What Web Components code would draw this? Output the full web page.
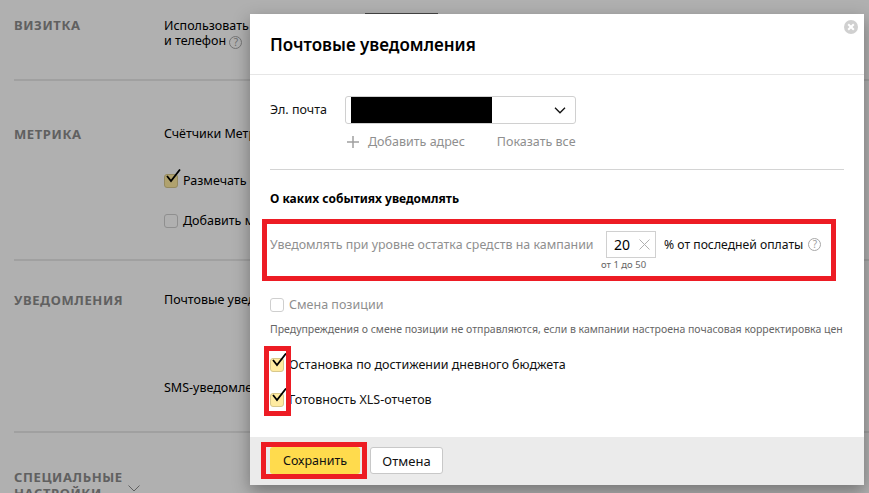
<!DOCTYPE html>
<html lang="ru">
<head>
<meta charset="utf-8">
<title>Почтовые уведомления</title>
<style>
	html, body {
		margin: 0;
		height: 493px;
		overflow: hidden;
		background: #fff;
		color: #000;
		font: 12.5px/16px "Noto Sans", "Open Sans", sans-serif;
	}
</style>
</head>
<body>
<settings-page>
	<settings-section style="height:79px" top="17">
		<span slot="label">Визитка</span>
		<div style="line-height:15px;margin-top:1px">Использовать единые адрес<br>и телефон <help-icon></help-icon></div>
	</settings-section>
	<settings-section style="height:178px" top="45">
		<span slot="label">Метрика</span>
		<div>Счётчики Метрики</div>
		<div style="margin-top:31px;display:flex;gap:5px;align-items:center"><check-box checked></check-box>Размечать ссылки</div>
		<div style="margin-top:24px;display:flex;gap:5px;align-items:center"><check-box></check-box>Добавить метку</div>
	</settings-section>
	<settings-section style="height:170px" top="31">
		<span slot="label">Уведомления</span>
		<div>Почтовые уведомления</div>
		<div style="margin-top:72px">SMS-уведомления</div>
	</settings-section>
	<settings-section top="36" last>
		<span slot="label">Специальные настройки</span>
	</settings-section>
</settings-page>
<notify-dialog></notify-dialog>
<script>
const SettingsPageTemplate = document.createElement('template');
SettingsPageTemplate.innerHTML = `
	<style>
		:host {
			display: block;
			height: 493px;
		}
		.scrim {
			position: absolute;
			inset: 0;
			background: rgba(0, 0, 0, .31);
		}
		.peek {
			position: absolute;
			left: 365px;
			top: 13px;
			width: 73px;
			height: 1px;
			background: #666;
		}
	</style>
	<slot></slot>
	<div class="peek"></div>
	<div class="scrim"></div>
`;

class SettingsPage extends HTMLElement {
	constructor() {
		super();
		this.attachShadow({mode: 'open'}).append(SettingsPageTemplate.content.cloneNode(true));
	}
}

const SettingsSectionTemplate = document.createElement('template');
SettingsSectionTemplate.innerHTML = `
	<style>
		:host {
			display: block;
			box-sizing: content-box;
			margin: 0 0 0 14px;
			border-bottom: 2px solid #e8e8e8;
		}
		:host([last]) {
			border-bottom: 0;
		}
		.row {
			display: grid;
			grid-template-columns: 150px 86px;
		}
		.label {
			width: 116px;
			font-size: 13px;
			font-weight: 700;
			color: #8c8c8c;
			letter-spacing: .6px;
			text-transform: uppercase;
			line-height: 16px;
		}
		.body {
			overflow: hidden;
			white-space: nowrap;
		}
		.more {
			position: absolute;
			left: 128px;
			top: 485px;
		}
	</style>
	<div class="row">
		<div class="label"><slot name="label"></slot></div>
		<div class="body"><slot></slot></div>
	</div>
`;

class SettingsSection extends HTMLElement {
	constructor() {
		super();
		const root = this.attachShadow({mode: 'open'});
		root.append(SettingsSectionTemplate.content.cloneNode(true));
		root.querySelector('.row').style.paddingTop = this.getAttribute('top') + 'px';
		if (this.hasAttribute('last')) {
			root.querySelector('.row').insertAdjacentHTML('beforeend', `
				<svg class="more" width="12" height="7" viewBox="0 0 12 7"><path d="M.5.5 6 6 11.5.5" fill="none" stroke="#8c8c8c"/></svg>`);
		}
	}
}

const CheckBoxTemplate = document.createElement('template');
CheckBoxTemplate.innerHTML = `
	<style>
		:host {
			display: inline-block;
			position: relative;
			flex: none;
			width: 14px;
			height: 14px;
			box-sizing: border-box;
			border: 1px solid #cfcfcf;
			border-radius: 3px;
			background: #fff;
		}
		:host([checked]) {
			background: #ffeba0;
			border-color: #d8c88c;
		}
		svg {
			display: none;
			position: absolute;
			left: 1px;
			top: -6px;
		}
		:host([checked]) svg {
			display: block;
		}
	</style>
	<svg width="16" height="14" viewBox="0 0 16 14"><path d="M1 7 5 12 14 .5" fill="none" stroke="#000" stroke-width="1.8"/></svg>
`;

class CheckBox extends HTMLElement {
	constructor() {
		super();
		this.attachShadow({mode: 'open'}).append(CheckBoxTemplate.content.cloneNode(true));
	}
}

const HelpIconTemplate = document.createElement('template');
HelpIconTemplate.innerHTML = `
	<style>
		:host {
			display: inline-block;
			width: 13px;
			height: 13px;
			box-sizing: border-box;
			border: 1px solid #a8a8a8;
			border-radius: 50%;
			color: #a0a0a0;
			font: 10px/11px "Noto Sans", sans-serif;
			text-align: center;
			vertical-align: -1px;
		}
	</style>
	?
`;

class HelpIcon extends HTMLElement {
	constructor() {
		super();
		this.attachShadow({mode: 'open'}).append(HelpIconTemplate.content.cloneNode(true));
	}
}

const RedMarkTemplate = document.createElement('template');
RedMarkTemplate.innerHTML = `
	<style>
		:host {
			display: block;
			position: absolute;
			box-sizing: border-box;
			border: 5px solid #ed1c24;
			pointer-events: none;
		}
	</style>
`;

class RedMark extends HTMLElement {
	constructor() {
		super();
		this.attachShadow({mode: 'open'}).append(RedMarkTemplate.content.cloneNode(true));
	}
}

const NotifyDialogTemplate = document.createElement('template');
NotifyDialogTemplate.innerHTML = `
	<style>
		:host {
			display: flex;
			flex-direction: column;
			position: absolute;
			left: 250px;
			top: 14px;
			width: 614px;
			height: 471px;
			background: #fff;
			box-shadow: 0 6px 16px rgba(0, 0, 0, .35);
			color: #111;
		}
		header {
			height: 61px;
			padding: 20px 20px 0;
			box-sizing: border-box;
			border-bottom: 1px solid #e6e6e6;
			font-size: 17px;
			line-height: 22px;
			font-weight: 600;
			color: #000;
		}
		.close {
			position: absolute;
			right: 6px;
			top: 6px;
		}
		main {
			flex: 1;
			padding: 21px 20px 0;
		}
		.mail {
			display: grid;
			grid-template-columns: 75px 231px;
			align-items: center;
		}
		.select {
			display: flex;
			align-items: center;
			justify-content: space-between;
			height: 28px;
			box-sizing: border-box;
			border: 1px solid #d0d0d0;
			border-radius: 3px;
			padding: 0 9px 0 5px;
		}
		.hidden-mail {
			width: 141px;
			height: 26px;
			background: #000;
		}
		.links {
			display: flex;
			align-items: center;
			margin: 10px 0 0 77px;
			color: #8f8f8f;
		}
		.links svg {
			margin-right: 9px;
		}
		.links span + span {
			margin-left: 32px;
		}
		hr {
			margin: 19px 0 0;
			border: 0;
			border-top: 1px solid #d4d4d4;
		}
		h3 {
			margin: 21px 0 0;
			font-size: 12px;
			line-height: 16px;
			font-weight: 700;
			color: #000;
		}
		.level {
			display: flex;
			margin-top: 24px;
			color: #8f8f8f;
		}
		.level .caption {
			line-height: 27px;
			width: 336px;
			font-size: 12.4px;
			white-space: nowrap;
		}
		.limit {
			width: 50px;
			position: relative;
		}
		.input {
			display: flex;
			align-items: center;
			justify-content: space-between;
			height: 27px;
			box-sizing: border-box;
			border: 1px solid #d0d0d0;
			padding: 0 5px 0 7px;
			color: #000;
			font-size: 14px;
		}
		.range {
			position: absolute;
			left: -5px;
			top: 27px;
			white-space: nowrap;
			font-size: 9.5px;
			line-height: 14px;
			color: #666;
		}
		.percent {
			display: flex;
			align-items: center;
			gap: 5px;
			margin-left: 8px;
			height: 27px;
			color: #111;
			font-size: 12.2px;
		}
		.check {
			display: flex;
			align-items: center;
			gap: 5px;
		}
		.position {
			margin-top: 39px;
			color: #8f8f8f;
		}
		.hint {
			margin-top: 9px;
			font-size: 10.5px;
			line-height: 14px;
			color: #666;
			white-space: nowrap;
		}
		.stop {
			margin-top: 21px;
		}
		.ready {
			margin-top: 19px;
		}
		footer {
			display: flex;
			gap: 9px;
			height: 48px;
			padding: 10px 9px 0 20px;
			box-sizing: border-box;
			background: #ebebeb;
		}
		button {
			height: 27px;
			border-radius: 3px;
			font: inherit;
			color: #111;
			padding: 0;
		}
		.save {
			width: 90px;
			background: #ffdb4d;
			border: 0;
		}
		.cancel {
			width: 73px;
			margin-left: 1px;
			background: #fff;
			border: 1px solid #c8c8c8;
			font-size: 13px;
		}
		red-mark {
			z-index: 2;
		}
	</style>
	<header>Почтовые уведомления</header>
	<svg class="close" width="14" height="14" viewBox="0 0 14 14">
		<circle cx="7" cy="7" r="7" fill="#d0d0d0"/>
		<path d="M4.2 4.2 9.8 9.8M9.8 4.2 4.2 9.8" stroke="#fff" stroke-width="2"/>
	</svg>
	<main>
		<div class="mail">
			<span>Эл. почта</span>
			<div class="select">
				<div class="hidden-mail"></div>
				<svg width="12" height="7" viewBox="0 0 12 7"><path d="M1 .8 6 5.8 11 .8" fill="none" stroke="#111" stroke-width="1.3"/></svg>
			</div>
		</div>
		<div class="links">
			<svg width="12" height="12" viewBox="0 0 12 12"><path d="M6 0V12M0 6H12" stroke="#a0a0a0" stroke-width="1.5"/></svg>
			<span>Добавить адрес</span>
			<span>Показать все</span>
		</div>
		<hr>
		<h3>О каких событиях уведомлять</h3>
		<div class="level">
			<div class="caption">Уведомлять при уровне остатка средств на кампании</div>
			<div class="limit">
				<div class="input">20
					<svg width="11" height="11" viewBox="0 0 11 11"><path d="M.5.5 10.5 10.5M10.5.5 .5 10.5" stroke="#b0b0b0"/></svg>
				</div>
				<div class="range">от 1 до 50</div>
			</div>
			<div class="percent">% от последней оплаты <help-icon></help-icon></div>
		</div>
		<div class="check position"><check-box></check-box>Смена позиции</div>
		<div class="hint">Предупреждения о смене позиции не отправляются, если в кампании настроена почасовая корректировка цен</div>
		<div class="check stop"><check-box checked></check-box>Остановка по достижении дневного бюджета</div>
		<div class="check ready"><check-box checked></check-box>Готовность XLS-отчетов</div>
	</main>
	<footer>
		<button class="save">Сохранить</button>
		<button class="cancel">Отмена</button>
	</footer>
	<red-mark style="left:12px;top:205px;width:574px;height:62px"></red-mark>
	<red-mark style="left:14px;top:332px;width:27px;height:70px"></red-mark>
	<red-mark style="left:11px;top:428px;width:106px;height:37px"></red-mark>
`;

class NotifyDialog extends HTMLElement {
	constructor() {
		super();
		this.attachShadow({mode: 'open'}).append(NotifyDialogTemplate.content.cloneNode(true));
	}
}

customElements.define('settings-page', SettingsPage);
customElements.define('settings-section', SettingsSection);
customElements.define('check-box', CheckBox);
customElements.define('help-icon', HelpIcon);
customElements.define('red-mark', RedMark);
customElements.define('notify-dialog', NotifyDialog);
</script>
</body>
</html>
